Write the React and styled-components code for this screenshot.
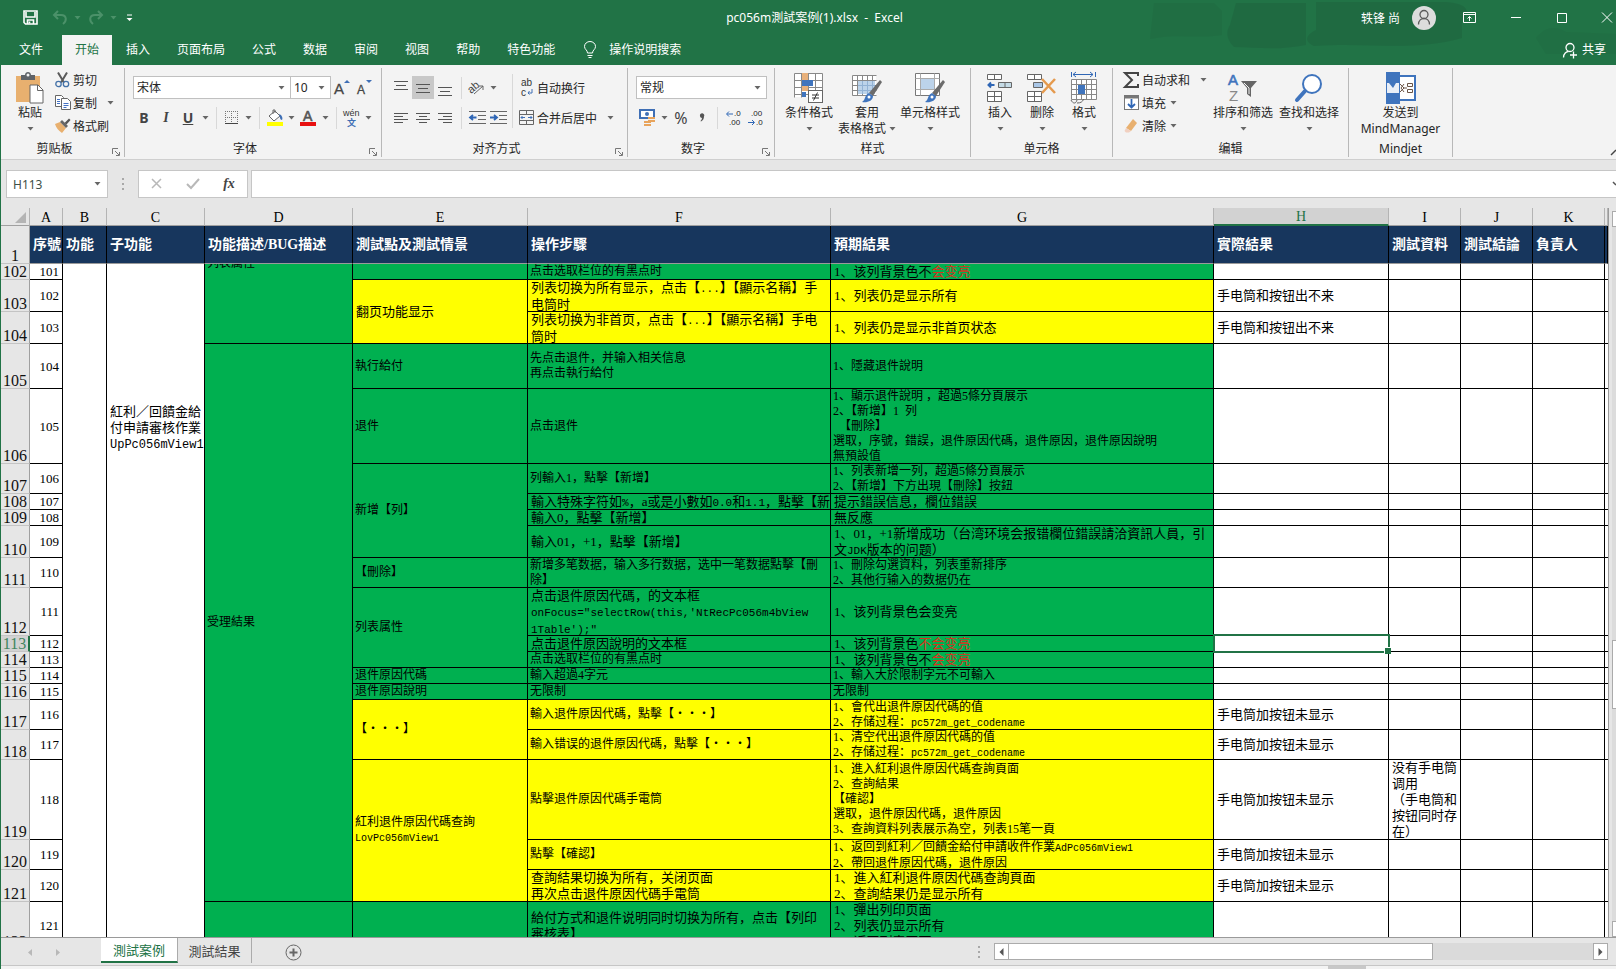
import React from 'react'
import styled, { createGlobalStyle } from 'styled-components'

const GlobalStyle = createGlobalStyle`
    * {
        box-sizing: border-box;
    }
    body {
        margin: 0;
        overflow: hidden;
        font-family: 'Noto Sans', 'Noto Sans CJK SC', sans-serif;
        font-size: 12px;
        color: #262626;
    }
    button, input, select {
        font: inherit;
        color: inherit;
        border: 0;
        padding: 0;
        margin: 0;
        background: none;
    }
    svg {
        overflow: visible;
    }
`

const Window = styled.div`
    display: flex;
    flex-direction: column;
    height: 100vh;
    border-left: 1px solid #217346;
    background: #e6e6e6;
    overflow: hidden;
`

/* ---------- title bar and tabs ---------- */

const Top = styled.header`
    position: relative;
    background: #217346;
    color: #fff;
`

const Smudge = styled.svg`
    position: absolute;
    top: 0;
    right: 0;
`

const TitleBar = styled.div`
    position: relative;
    display: grid;
    grid-template-columns: 1fr auto 1fr;
    align-items: center;
    height: 35px;
`

const QuickBar = styled.div`
    display: flex;
    align-items: center;
    padding-left: 18px;
`

const QuickButton = styled.button`
    display: flex;
    align-items: center;
    justify-content: center;
    width: ${p => p.$w || 22}px;
    height: 24px;
    margin-right: ${p => p.$gap || 0}px;
    color: ${p => (p.$off ? '#4b9169' : '#fff')};
`

const Title = styled.h1`
    margin: 0;
    padding-left: 12px;
    font-size: 12px;
    font-weight: 400;
    line-height: 16px;
    white-space: pre;
`

const WindowTools = styled.div`
    display: flex;
    align-items: center;
    justify-content: flex-end;
`

const Avatar = styled.span`
    display: flex;
    align-items: center;
    justify-content: center;
    width: 24px;
    height: 24px;
    margin: 0 18px 0 12px;
    border-radius: 50%;
    background: #dcdcdc;
`

const WindowButton = styled.button`
    display: flex;
    align-items: center;
    justify-content: center;
    width: ${p => p.$w || 46}px;
    height: 30px;
`

const Tabs = styled.nav`
    position: relative;
    display: flex;
    gap: 1px;
    height: 30px;
    line-height: 28px;
`

const Tab = styled.button`
    padding: 0 13px;
    background: ${p => (p.$active ? '#f3f3f3' : 'transparent')};
    color: ${p => (p.$active ? '#217346' : '#fff')};
`

const TabFile = styled(Tab)`
    padding: 0 18px;
`

const Tell = styled.button`
    display: flex;
    align-items: center;
    gap: 13px;
    margin-left: 15px;
`

const Share = styled.button`
    display: flex;
    align-items: center;
    gap: 4px;
    margin-left: auto;
    padding-right: 10px;
`

/* ---------- ribbon ---------- */

const Ribbon = styled.div`
    display: flex;
    padding: 3px 0 2px;
    background: #f3f3f3;
    border-bottom: 1px solid #cfcfcf;
`

const Group = styled.section`
    display: flex;
    flex-direction: column;
    width: ${p => p.$w}px;
    height: 89px;
    border-right: 1px solid #b8b8b8;
`

const GroupBody = styled.div`
    display: flex;
    flex: 1;
    padding-left: ${p => p.$pad || 0}px;
    justify-content: ${p => (p.$center ? 'center' : 'flex-start')};
`

const GroupFoot = styled.div`
    display: flex;
    height: 16px;
    line-height: 16px;
    text-align: center;
`

const GroupName = styled.span`
    flex: 1;
`

const Launcher = styled.button`
    display: flex;
    align-items: flex-end;
    justify-content: center;
    width: 16px;
    padding-bottom: 1px;
`

const Rows = styled.div`
    display: flex;
    flex-direction: column;
    gap: ${p => (p.$tight ? 0 : 7)}px;
    padding-top: ${p => (p.$tight ? 0 : 8)}px;
`

const Row = styled.div`
    display: flex;
    align-items: center;
    height: 23px;
`

const IconButton = styled.button`
    display: flex;
    align-items: center;
    justify-content: center;
    width: ${p => p.$w || 22}px;
    height: 23px;
    background: ${p => (p.$on ? '#c8c8c8' : 'transparent')};
`

const DropButton = styled(IconButton)`
    width: 12px;
`

const LetterButton = styled(IconButton)`
    font-size: ${p => (p.$thin ? 16 : 14)}px;
    font-weight: ${p => (p.$thin ? 400 : 700)};
    font-style: ${p => (p.$italic ? 'italic' : 'normal')};
    font-family: ${p => (p.$italic ? "'Liberation Serif', serif" : 'inherit')};
    text-decoration: ${p => (p.$under ? 'underline' : 'none')};
    color: #444;
`

const Sep = styled.span`
    width: 1px;
    height: ${p => (p.$tall ? 54 : 22)}px;
    margin: ${p => (p.$tall ? '6px 3px 0' : '0 5px')};
    background: #d8d8d8;
`

const ToolButton = styled.button`
    display: flex;
    align-items: center;
    height: 23px;
    white-space: nowrap;
`

const ToolIcon = styled.span`
    display: flex;
    justify-content: center;
    width: 21px;
`

const ToolDrop = styled.span`
    display: flex;
    margin-left: ${p => p.$gap || 4}px;
`

const BigButton = styled.button`
    display: flex;
    flex-direction: column;
    align-items: center;
    align-self: flex-start;
    width: ${p => p.$w}px;
    padding-top: 3px;
    line-height: 16px;
    white-space: nowrap;
`

const BigIcon = styled.span`
    display: flex;
    align-items: center;
    height: 34px;
`

const BigLine = styled.span`
    display: flex;
    align-items: center;
    gap: 3px;
    height: 16px;
`

const SelectBox = styled.label`
    display: grid;
    align-items: center;
    width: ${p => p.$w}px;
    height: 23px;
    margin-right: -1px;
    border: 1px solid #c0c0c0;
    background: #fff;
    > * {
        grid-area: 1 / 1;
    }
    > svg {
        justify-self: end;
        margin-right: 5px;
        pointer-events: none;
    }
    select {
        width: 100%;
        padding-left: 3px;
        appearance: none;
        outline: none;
    }
`

const Collapse = styled.button`
    align-self: flex-end;
    display: flex;
    margin-left: auto;
`

/* ---------- formula bar ---------- */

const FormulaBar = styled.div`
    display: flex;
    height: 48px;
    padding: 10px 0 10px 5px;
`

const NameBox = styled.label`
    display: flex;
    align-items: center;
    width: 102px;
    padding-right: 6px;
    border: 1px solid #c6c6c6;
    background: #fff;
    color: #3d4f46;
    input {
        flex: 1;
        min-width: 0;
        padding-left: 6px;
        outline: none;
    }
`

const Grip = styled.span`
    display: flex;
    align-items: center;
    justify-content: center;
    width: 30px;
`

const FormulaTools = styled.div`
    display: flex;
    align-items: center;
    justify-content: space-around;
    width: 110px;
    border: 1px solid #c6c6c6;
    background: #fff;
`

const FormulaInput = styled.div`
    display: flex;
    flex: 1;
    margin-left: 3px;
    border: 1px solid #c6c6c6;
    border-right: 0;
    background: #fff;
    input {
        flex: 1;
        padding-left: 6px;
        outline: none;
    }
`

/* ---------- sheet ---------- */

const SheetArea = styled.main`
    display: flex;
    flex: 1;
    min-height: 0;
    border-bottom: 1px solid #9a9a9a;
`

const SheetClip = styled.div`
    flex: 1;
    min-width: 0;
    overflow: hidden;
    border-right: 1px solid #9a9a9a;
    background: #fff;
`

const Sheet = styled.table`
    width: 100%;
    table-layout: fixed;
    border-collapse: separate;
    border-spacing: 0;
    font-family: 'Liberation Serif', 'Noto Sans CJK SC', serif;
    color: #000;
    white-space: nowrap;
    td:last-child {
        border-right: 0;
    }
`

const ColHead = styled.th`
    height: 18px;
    padding: ${p => (p.$on ? 1 : 2)}px 0 0;
    border-right: 1px solid #b4b4b4;
    border-bottom: ${p => (p.$on ? '2px solid #217346' : '1px solid #a0a0a0')};
    background: ${p => (p.$on ? '#d2d2d2' : '#e6e6e6')};
    color: ${p => (p.$on ? '#217346' : '#000')};
    font-size: 14px;
    font-weight: 400;
    line-height: 15px;
`

const Corner = styled(ColHead)`
    text-align: right;
    svg {
        display: block;
        margin: 0 3px 0 auto;
    }
`

const RowHead = styled.th`
    height: ${p => p.$h}px;
    padding: 0;
    border-right: ${p => (p.$on ? '2px solid #217346' : '1px solid #a0a0a0')};
    border-bottom: 1px solid #c4c4c4;
    background: ${p => (p.$on ? '#d2d2d2' : '#e6e6e6')};
    color: ${p => (p.$on ? '#3f8560' : '#111')};
    font-size: 16px;
    font-weight: 400;
    line-height: 15px;
    vertical-align: bottom;
`

const TitleCell = styled.th`
    height: 38px;
    padding: 0 0 0 3px;
    border-right: 1px solid #000;
    border-bottom: 1px solid #9a9a9a;
    background: #17365d;
    color: #fff;
    font-size: 14px;
    font-weight: 700;
    line-height: 16px;
    text-align: left;
`

const fills = { green: '#00b050', yellow: '#ffff00', white: '#fff' }

const Cell = styled.td`
    position: ${p => (p.$selected ? 'relative' : 'static')};
    padding: 0 0 0 ${p => (p.$small ? 2 : 3)}px;
    border-right: 1px solid #000;
    border-bottom: 1px solid #000;
    background: ${p => fills[p.$fill || 'white']};
    font-size: ${p => (p.$small ? 12 : 13)}px;
    line-height: ${p => (p.$small ? 15 : 16)}px;
    vertical-align: middle;
    overflow: ${p => (p.$selected ? 'visible' : 'hidden')};
`

const NumberCell = styled(Cell)`
    padding: 0 3px 0 0;
    line-height: 15px;
    text-align: right;
`

const TopCell = styled(Cell)`
    padding-top: 140px;
    vertical-align: top;
`

const ScrolledCell = styled(Cell)`
    vertical-align: top;
`

/* the tail of a label whose row is scrolled under the frozen header */
const Tail = styled.div`
    display: flex;
    align-items: flex-end;
    height: 7px;
    overflow: hidden;
`

const Text = styled.div`
    max-height: ${p => p.$h}px;
    overflow: hidden;
`

const Code = styled.span`
    font-family: 'Liberation Mono', monospace;
    font-size: ${p => p.$size || 11}px;
`

const Red = styled.span`
    color: #d9301c;
`

const Selection = styled.span`
    position: absolute;
    inset: -2px -2px -2px -1px;
    border: 2px solid #217346;
    &::after {
        content: '';
        position: absolute;
        right: -3px;
        bottom: -3px;
        width: 6px;
        height: 6px;
        border: 1px solid #fff;
        border-width: 1px 0 0 1px;
        background: #217346;
    }
`

const VScroll = styled.div`
    display: flex;
    flex-direction: column;
    width: 7px;
    padding: 3px 0 0 3px;
`

const VPart = styled.span`
    flex: ${p => p.$grow || '0 0 auto'};
    height: ${p => p.$h || 0}px;
    border: ${p => (p.$grow ? 0 : '1px solid #ababab')};
    border-right: 0;
    background: ${p => (p.$grow ? '#dcdcdc' : '#fff')};
`

/* ---------- sheet tabs ---------- */

const Bottom = styled.footer`
    display: flex;
    align-items: flex-start;
    height: 28px;
    border-bottom: 1px solid #c6c6c6;
`

const Nav = styled.div`
    display: flex;
    align-items: center;
    justify-content: center;
    gap: 24px;
    width: 100px;
    height: 28px;
    padding-right: 14px;
`

const SheetTab = styled.button`
    height: 25px;
    width: ${p => (p.$active ? 77 : 74)}px;
    border-right: 1px solid #ababab;
    border-bottom: ${p => (p.$active ? '2px solid #217346' : '0')};
    background: ${p => (p.$active ? '#fff' : 'transparent')};
    color: ${p => (p.$active ? '#217346' : '#444')};
    font-size: 13px;
    line-height: 22px;
`

const AddSheet = styled.button`
    display: flex;
    align-items: center;
    height: 28px;
    margin-left: 33px;
`

const HScroll = styled.div`
    display: flex;
    width: 38%;
    height: 17px;
    margin: 5px 8px 0 0;
    background: #dadada;
`

const HArrow = styled.button`
    display: flex;
    align-items: center;
    justify-content: center;
    width: 15px;
    border: 1px solid #ababab;
    background: #fff;
`

const HThumb = styled.span`
    width: 69%;
    border: 1px solid #ababab;
    border-left: 0;
    background: #fff;
`

const HTrack = styled.span`
    flex: 1;
`

const BottomGrip = styled(Grip)`
    height: 28px;
    margin-left: auto;
`

const Status = styled.div`
    display: flex;
    justify-content: flex-end;
    height: 3px;
    padding-right: 250px;
    background: #f3f3f3;
`

const StatusMark = styled.span`
    width: 38px;
    background: #c8c8c8;
`

/* ---------- drawings ---------- */

const iconFont = 'Liberation Sans, Noto Sans CJK SC, sans-serif'

const Caret = ({ color = '#666' }) => (
    <svg width="7" height="4"><path d="M0.5 0h6L3.5 3.6z" fill={color} /></svg>
)

const Drop = ({ label }) => <DropButton aria-label={label}><Caret /></DropButton>

const Dots = () => (
    <svg width="3" height="15" fill="#a8a8a8">
        <rect width="2" height="2" y="1" /><rect width="2" height="2" y="6" /><rect width="2" height="2" y="11" />
    </svg>
)

const Lines = ({ rows, color = '#555' }) => (
    <svg width="16" height="16" stroke={color}>
        {rows.map(([x, y, w]) => <path key={y} d={`M${x} ${y}.5h${w}`} />)}
    </svg>
)

const SaveIcon = () => (
    <svg width="15" height="15" fill="none" stroke="#fff" strokeWidth="1.6">
        <path d="M1 1h13v13H2.500L1 12.500z" /><path d="M3 2v5h9V2" /><path d="M4.500 14v-4h6v4M6.500 11.500v2" />
    </svg>
)

const UndoIcon = ({ flip }) => (
    <svg width="16" height="15" fill="none" stroke="currentColor" strokeWidth="2" viewBox="0 0 16 15">
        <g transform={flip ? 'translate(16 0) scale(-1 1)' : undefined}>
            <path d="M6 1L2 5l4 4M2 5h7c6 0 6 6 2 9" />
        </g>
    </svg>
)

const PasteIcon = () => (
    <svg width="30" height="32" viewBox="0 0 30 32">
        <path d="M1 4h24v26H1z" fill="#e8b06f" />
        <path d="M6 3h4c0-4 6-4 6 0h4v5H6z" fill="#5f6368" />
        <circle cx="13" cy="3" r="1.500" fill="#f3f3f3" />
        <path d="M15 13h8l5 5v13H15z" fill="#fff" stroke="#666" />
        <path d="M22.500 13v5.500H28" fill="none" stroke="#666" />
    </svg>
)

const CutIcon = () => (
    <svg width="15" height="16" fill="none">
        <path d="M3 0.500l6 10M12 0.500l-6 10" stroke="#5a5a5a" strokeWidth="2" />
        <circle cx="3.500" cy="12" r="2.700" stroke="#4472a8" strokeWidth="1.300" />
        <circle cx="11" cy="12" r="2.700" stroke="#4472a8" strokeWidth="1.300" />
    </svg>
)

const CopyIcon = () => (
    <svg width="16" height="15" fill="#fff" stroke="#666">
        <path d="M0.500 0.500h6l2 2v9h-8z" /><path d="M6.500 3.500h6l3 3v8h-9z" />
        <path d="M2 4.500h3M2 6.500h3M2 8.500h3M8.500 8.500h5M8.500 10.500h5M8.500 12.500h3" stroke="#4472c4" />
    </svg>
)

const PainterIcon = () => (
    <svg width="16" height="15">
        <path d="M0 6l5-2 6 6-4 5c-3-2-6-5-7-9z" fill="#e8b06f" />
        <path d="M5 4l2-2 6 6-2 2z" fill="#666" /><path d="M9.500 5L14 0.500l1.500 1.500L11.500 6.500z" fill="#555" />
    </svg>
)

const FontSizeIcon = ({ down }) => (
    <svg width="16" height="18" fontFamily={iconFont}>
        <text x="0" y="15" fontSize={down ? 12 : 15} fill="#444" stroke="#444" strokeWidth="0.300">A</text>
        <path d={down ? 'M9 1h6l-3 3z' : 'M10 4h6l-3-3z'} fill="#3f6fb5" />
    </svg>
)

const BorderIcon = () => (
    <svg width="14" height="14" stroke="#777" strokeDasharray="1 1">
        <path d="M0 0.500h13M0 6.500h13M0.500 0v13M6.500 0v13M12.500 0v13" />
        <path d="M0 12.500h13" strokeDasharray="none" stroke="#444" />
    </svg>
)

const FillIcon = () => (
    <svg width="18" height="17">
        <path d="M3 7l6-5 5 5-6 5z" fill="#fff" stroke="#666" /><path d="M7 5V1h2v3" fill="none" stroke="#666" />
        <path d="M13 5c3 1 4 4 3 6-2 0-2-3-3-6z" fill="#3f6fb5" />
        <rect y="13" x="1" width="16" height="4" fill="#ff0" />
    </svg>
)

const FontColorIcon = () => (
    <svg width="17" height="17">
        <text x="3" y="12" fontSize="14" fill="#555" stroke="#555" strokeWidth="0.600" fontFamily={iconFont}>A</text>
        <rect y="13" width="16" height="4" fill="#e81010" />
    </svg>
)

const PhoneticIcon = () => (
    <svg width="18" height="20" fontFamily={iconFont}>
        <text x="0" y="8" fontSize="9" fill="#333">wén</text>
        <text x="4" y="18" fontSize="9" fontWeight="700" fill="#3f6fb5">文</text>
    </svg>
)

const OrientIcon = () => (
    <svg width="18" height="17">
        <text x="0" y="11" fontSize="11" fill="#444" transform="rotate(-40 7 9)" fontFamily={iconFont}>ab</text>
        <path d="M6 15l9-8M15 11V7h-4" fill="none" stroke="#666" />
    </svg>
)

const IndentIcon = ({ right }) => (
    <svg width="17" height="14" fill="none">
        <path d="M0 0.500h17M9 4.500h8M9 8.500h8M0 12.500h17" stroke="#666" />
        <path d={right ? 'M0 6.500h6M4 4l3 2.500-3 2.500' : 'M1.500 6.500h6M4 4L1 6.500l3 2.500'} stroke="#2f66b5" strokeWidth="1.800" />
    </svg>
)

const WrapIcon = () => (
    <svg width="14" height="18" fontFamily={iconFont} fontSize="10" fill="#333">
        <text x="1" y="7">ab</text><text x="1" y="17">c</text>
        <path d="M12 10v4H8M9.500 12L8 14l1.500 1.500" fill="none" stroke="#3f6fb5" />
    </svg>
)

const MergeIcon = () => (
    <svg width="16" height="16" fill="none" stroke="#666">
        <path d="M0.500 0.500h14v14h-14zM0.500 4.500h14M0.500 10.500h14M7.500 0.500v4M7.500 10.500v4" />
        <path d="M2 7.500h4M9 7.500h4M3.500 6L2 7.500 3.500 9M11.500 6L13 7.500 11.500 9" stroke="#3f6fb5" />
    </svg>
)

const MoneyIcon = () => (
    <svg width="17" height="17">
        <rect x="1" y="1" width="14" height="8" fill="#fff" stroke="#3f6fb5" strokeWidth="2" />
        <circle cx="8" cy="5" r="2" fill="#3f6fb5" />
        <path d="M9 8h7v2H9zM9 11h7v2H9zM5 12h7v2H5zM5 15h7v2H5z" fill="#e8a45c" />
    </svg>
)

const DecimalIcon = ({ less }) => (
    <svg width="16" height="17" fontSize="8" fill="#222" fontFamily={iconFont}>
        <text x={less ? 3 : 8} y="7">{less ? '.00' : '.0'}</text>
        <text x={less ? 8 : 3} y="16">{less ? '.0' : '.00'}</text>
        <path d={less ? 'M0 13.500h6M4 11l2.500 2.500L4 16' : 'M1 5h6M3 2.500L0.500 5 3 7.500'} fill="none" stroke="#2f66b5" />
    </svg>
)

const GridBase = ({ x = 0, y = 0, w = 24, h = 24, step = 6 }) => {
    const lines = []
    for (let i = 0; i <= w; i += step) lines.push(`M${x + i}.5 ${y}.5v${h}`)
    for (let j = 0; j <= h; j += step) lines.push(`M${x}.5 ${y + j}.5h${w}`)
    return (
        <g>
            <rect x={x} y={y} width={w} height={h} fill="#fff" />
            <path d={lines.join('')} stroke="#888" fill="none" />
        </g>
    )
}

const Brush = () => (
    <g>
        <path d="M28 8l2 2-9 14-4-3z" fill="#6b6b6b" />
        <path d="M17 21l4 3c0 5-6 7-11 6 4-2 2-7 7-9z" fill="#3f74bd" />
        <circle cx="17" cy="25" r="1.500" fill="#fff" />
    </g>
)

const ConditionIcon = () => (
    <svg width="30" height="32">
        <GridBase x={0} y={1} w={28} h={24} step={7} />
        <path d="M8 1h6v7H8zM8 14h6v5H8z" fill="#e8b07a" /><path d="M8 8h11v6H8zM8 20h4v5H8z" fill="#3f74bd" />
        <rect x="14.500" y="18.500" width="14" height="12" fill="#fff" stroke="#666" />
        <path d="M18 23h7M18 26h7M23.500 20.500l-4 8" stroke="#333" />
    </svg>
)

const TableFormatIcon = () => (
    <svg width="31" height="32">
        <GridBase x={0} y={3} w={24} h={20} step={5} />
        <path d="M6 9h17v13H6z" fill="#bcd3ea" /><path d="M6 13.500h17M6 18.500h17M10.500 9v13M15.500 9v13M20.500 9v13" stroke="#92b2d4" />
        <Brush />
    </svg>
)

const CellStyleIcon = () => (
    <svg width="31" height="32">
        <path d="M0.500 1.500h24v22h-24z" fill="#fff" stroke="#777" />
        <path d="M0.500 6.500h24M0.500 17.500h24M5.500 1.500v22M19.500 1.500v22" stroke="#aaa" />
        <rect x="6" y="7" width="13" height="10" fill="#bcd3ea" />
        <Brush />
    </svg>
)

const InsertIcon = () => (
    <svg width="26" height="30" fill="#fff" stroke="#666">
        <path d="M0.500 1.500h14v5h-14zM7.500 1.500v5M0.500 18.500h14v10h-14zM0.500 23.500h14M7.500 18.500v10" />
        <path d="M11.500 9.500h13v5h-13z" fill="#c5dbe6" /><path d="M18 9.500v5" />
        <path d="M1.500 12h6M4 9.500L1.500 12 4 14.500" fill="none" stroke="#2f66b5" strokeWidth="2" />
    </svg>
)

const DeleteIcon = () => (
    <svg width="30" height="30" fill="#fff" stroke="#666">
        <path d="M0.500 1.500h14v5h-14zM7.500 1.500v5M0.500 18.500h14v10h-14zM0.500 23.500h14M7.500 18.500v10" />
        <path d="M6.500 9.500h9v5h-9z" fill="#a9c6e6" />
        <path d="M15 6l13 14M28 6L15 20" stroke="#e59a4e" strokeWidth="2.500" />
    </svg>
)

const FormatIcon = () => (
    <svg width="28" height="32">
        <path d="M3 2.500h20M6 0L3 2.500 6 5M20 0l3 2.500L20 5M1.500 0v5M25.500 0v5" stroke="#2f66b5" fill="none" />
        <GridBase x={1} y={7} w={25} h={20} step={5} />
        <rect x="8" y="13" width="7" height="9" fill="#3f74bd" />
        <path d="M1 28c2 4 5 4 6 0M7 31c4 0 5-1 7-4" stroke="#666" fill="none" />
    </svg>
)

const SumIcon = () => (
    <svg width="15" height="16"><path d="M14 4V1H1l7 7-7 7h13v-3" fill="none" stroke="#444" strokeWidth="2" /></svg>
)

const FillDownIcon = () => (
    <svg width="15" height="16" fill="none">
        <rect x="0.500" y="0.500" width="14" height="14" fill="#fff" stroke="#777" /><path d="M1 2h13" stroke="#777" strokeWidth="3" />
        <path d="M7.500 4v8M4 9l3.500 3.500L11 9" stroke="#2f66b5" strokeWidth="1.800" />
    </svg>
)

const EraserIcon = () => (
    <svg width="15" height="15"><path d="M9 1l4 4-6 8-5-3z" fill="#e8b06f" /><path d="M2 10l5 3-2 1.500H2L0.500 13z" fill="#f1d0c0" /></svg>
)

const SortIcon = () => (
    <svg width="30" height="30" fontFamily={iconFont} fontSize="15">
        <text x="0" y="12" fill="#3f74bd" stroke="#3f74bd" strokeWidth="0.600">A</text>
        <text x="1" y="28" fill="#888">Z</text>
        <path d="M13 8h16l-6 7v9l-4-3v-6z" fill="#666" /><path d="M16 10l5 5v6" stroke="#f3f3f3" fill="none" />
    </svg>
)

const FindIcon = () => (
    <svg width="28" height="30" fill="none" stroke="#3f74bd">
        <circle cx="17" cy="11" r="9" strokeWidth="2" fill="#fff" /><path d="M10 18L2 27" strokeWidth="4" strokeLinecap="round" />
    </svg>
)

const MindIcon = () => (
    <svg width="30" height="32">
        <rect x="8" y="4" width="21" height="24" fill="#fff" stroke="#3f74bd" strokeWidth="2" />
        <rect width="14" height="32" fill="#3f74bd" />
        <path d="M1 11h2l4 5 3-5h3v10H1z" fill="#e8eef7" />
        <path d="M14 12l4 4-4 4M18 12l-3 4 3 4M18 16h3M21.500 11.500h5v3h-5zM21.500 17.500h5v3h-5z" fill="none" stroke="#6b5546" />
    </svg>
)

const PersonIcon = ({ color, plus }) => (
    <svg width="16" height="17" fill="none" stroke={color} strokeWidth="1.300">
        <circle cx="8" cy="5.500" r="4" /><path d={plus ? 'M1.500 15.500c0-4 3-6 5-6M8 13h7M11.500 9.500v7' : 'M2.500 15.500c0-8 11-8 11 0'} />
    </svg>
)

const LaunchIcon = () => (
    <svg width="8" height="8" fill="none" stroke="#777"><path d="M0.500 6V0.500H6M3 3l4 4M7.500 4v3.500H4" /></svg>
)

const BulbIcon = () => (
    <svg width="12" height="18" fill="none" stroke="#fff">
        <path d="M3.500 12c0-3-3-3.500-3-6.500a5.500 5 0 0 1 11 0c0 3-3 3.500-3 6.500zM3.500 14.500h5M4.500 16.500h3" />
    </svg>
)

/* ---------- data ---------- */

const tabs = ['开始', '插入', '页面布局', '公式', '数据', '审阅', '视图', '帮助', '特色功能']

const columns = [
    ['A', 33], ['B', 44], ['C', 98], ['D', 148], ['E', 175], ['F', 303],
    ['G', 383], ['H', 175], ['I', 72], ['J', 72], ['K', 72], ['', null],
]

const titles = [
    '序號', '功能', '子功能', '功能描述/BUG描述', '測試點及測試情景', '操作步驟',
    '預期結果', '實際結果', '測試資料', '測試結論', '負責人', '',
]

const cell = (text, fill, small, span) => ({ text, fill, small, span })
const G = (text, span) => cell(text, 'green', true, span)
const GL = (text, span) => cell(text, 'green', false, span)
const Y = (text, span) => cell(text, 'yellow', true, span)
const YL = (text, span) => cell(text, 'yellow', false, span)

const rows = [
    { n: 102, h: 16, e: G(''), f: G('点击选取栏位的有黑点时'), g: GL(<>1、该列背景色不<Red>会变亮</Red></>) },
    { n: 103, h: 32, e: YL('翻页功能显示', 2), f: YL(<>列表切换为所有显示，点击【<Code>...</Code>】【顯示名稱】手<br />电筒时</>), g: YL('1、列表仍是显示所有'), r: '手电筒和按钮出不来' },
    { n: 104, h: 32, f: YL(<>列表切换为非首页，点击【<Code>...</Code>】【顯示名稱】手电<br />筒时</>), g: YL('1、列表仍是显示非首页状态'), r: '手电筒和按钮出不来' },
    { n: 105, h: 45, d: G('受理結果', 17), e: G('執行給付'), f: G(<>先点击退件，并输入相关信息<br />再点击執行給付</>), g: G('1、隱藏退件說明') },
    { n: 106, h: 75, e: G('退件'), f: G('点击退件'), g: G(<>1、顯示退件說明 ，超過5條分頁展示<br />2、【新增】1&nbsp; 列<br />&nbsp; 【刪除】<br />選取，序號，錯誤，退件原因代碼，退件原因，退件原因說明<br />無預設值</>) },
    { n: 107, h: 30, e: G('新增【列】', 4), f: G('列輸入1，點擊【新增】'), g: G(<>1、列表新增一列，超過5條分頁展示<br />2、【新增】下方出現【刪除】按鈕</>) },
    { n: 108, h: 16, f: GL(<>輸入特殊字符如<Code>%</Code>，a或是小數如<Code>0.0</Code>和<Code>1.1</Code>，點擊【新增】</>), g: GL('提示錯誤信息，欄位錯誤') },
    { n: 109, h: 16, f: GL('輸入0，點擊【新增】'), g: GL('無反應') },
    { n: 110, h: 32, f: GL('輸入01，+1，點擊【新增】'), g: GL(<>1、01，+1新增成功（台湾环境会报错欄位錯誤請洽資訊人員，引<br />文<Code>JDK</Code>版本的问题）</>) },
    { n: 111, h: 30, e: G('【刪除】'), f: G(<>新增多笔数据，输入多行数据，选中一笔数据點擊【刪<br />除】</>), g: G(<>1、刪除勾選資料，列表重新排序<br />2、其他行输入的数据仍在</>) },
    { n: 112, h: 48, e: G('列表属性', 3), f: GL(<>点击退件原因代碼，的文本框<br /><Code>onFocus="selectRow(this,'NtRecPc056m4bView</Code><br /><Code>1Table');"</Code></>), g: GL('1、该列背景色会变亮') },
    { n: 113, h: 16, f: GL('点击退件原因說明的文本框'), g: GL(<>1、该列背景色<Red>不会变亮</Red></>), selected: true },
    { n: 114, h: 16, f: G('点击选取栏位的有黑点时'), g: GL(<>1、该列背景色不<Red>会变亮</Red></>) },
    { n: 115, h: 16, e: G('退件原因代碼'), f: G('輸入超過4字元'), g: G('1、輸入大於限制字元不可輸入') },
    { n: 116, h: 16, e: G('退件原因說明'), f: G('无限制'), g: G('无限制') },
    { n: 117, h: 30, e: Y('【・・・】', 2), f: Y('輸入退件原因代碼，點擊【・・・】'), g: Y(<>1、會代出退件原因代碼的值<br />2、存储过程：<Code $size={10}>pc572m_get_codename</Code></>), r: '手电筒加按钮未显示' },
    { n: 118, h: 30, f: Y('輸入错误的退件原因代碼，點擊【・・・】'), g: Y(<>1、清空代出退件原因代碼的值<br />2、存储过程：<Code $size={10}>pc572m_get_codename</Code></>), r: '手电筒加按钮未显示' },
    { n: 119, h: 80, e: Y(<>紅利退件原因代碼查詢<br /><Code $size={10}>LovPc056mView1</Code></>, 3), f: Y('點擊退件原因代碼手電筒'), g: Y(<>1、進入紅利退件原因代碼查詢頁面<br />2、查詢結果<br />【確認】<br />選取，退件原因代碼，退件原因<br />3、查詢資料列表展示為空，列表15笔一頁</>), r: '手电筒加按钮未显示', i: <>没有手电筒<br />调用<br />（手电筒和<br />按钮同时存<br />在）</> },
    { n: 120, h: 30, f: Y('點擊【確認】'), g: Y(<>1、返回到紅利／回饋金給付申請收件作業<Code $size={10}>AdPc056mView1</Code><br />2、帶回退件原因代碼，退件原因</>), r: '手电筒加按钮未显示' },
    { n: 121, h: 32, f: YL(<>查詢結果切换为所有，关闭页面<br />再次点击退件原因代碼手電筒</>), g: YL(<>1、進入紅利退件原因代碼查詢頁面<br />2、查詢結果仍是显示所有</>), r: '手电筒加按钮未显示' },
    { n: 122, h: 48, d: G(''), e: G(''), f: GL(<>給付方式和退件说明同时切换为所有，点击【列印<br />審核表】</>), g: GL(<>1、彈出列印页面<br />2、列表仍显示所有<br />3、返回列表頁面</>) },
]

const DataCell = ({ data, h }) => (
    <Cell $fill={data.fill} $small={data.small} rowSpan={data.span}>
        {data.span ? data.text : <Text $h={h - 1}>{data.text}</Text>}
    </Cell>
)

const Big = ({ w, icon, lines, drop }) => (
    <BigButton $w={w}>
        <BigIcon>{icon}</BigIcon>
        {lines.map((line, i) => (
            <BigLine key={line}>
                {line}
                {drop && i === 1 && <Caret />}
            </BigLine>
        ))}
        {lines.length === 1 && <BigLine><Caret /></BigLine>}
    </BigButton>
)

const Tool = ({ icon, text, drop, gap }) => (
    <ToolButton>
        <ToolIcon>{icon}</ToolIcon>
        {text}
        {drop && <ToolDrop $gap={gap}><Caret /></ToolDrop>}
    </ToolButton>
)

const RibbonGroup = ({ name, w, pad, center, launch, children }) => (
    <Group $w={w}>
        <GroupBody $pad={pad} $center={center}>{children}</GroupBody>
        <GroupFoot>
            <GroupName>{name}</GroupName>
            {launch && <Launcher aria-label={`${name}设置`}><LaunchIcon /></Launcher>}
        </GroupFoot>
    </Group>
)

const Header = () => (
    <Top>
        <Smudge width="480" height="65" fill="#1d5a3a" opacity="0.35" aria-hidden="true">
            <path d="M18 3h60l8 8v24c-25 4-45-2-72 4z" opacity="0.5" />
            <path d="M100 3h70v42c-30 6-50 2-72 2-8-8-8-16-4-22z" />
            <path d="M180 2h130c24 2 24 10 16 20v16c-50 14-90 4-148 8-12-6-6-12 2-16z" />
            <path d="M400 38c10-12 20-12 30-6l50 2v20h-70z" opacity="0.4" />
        </Smudge>
        <TitleBar>
            <QuickBar>
                <QuickButton $gap={8} aria-label="保存"><SaveIcon /></QuickButton>
                <QuickButton $off aria-label="撤消"><UndoIcon /></QuickButton>
                <QuickButton $w={12} $gap={2} $off aria-label="撤消列表"><Caret color="#4b9169" /></QuickButton>
                <QuickButton $off aria-label="恢复"><UndoIcon flip /></QuickButton>
                <QuickButton $w={12} $gap={4} $off aria-label="恢复列表"><Caret color="#4b9169" /></QuickButton>
                <QuickButton $w={12} aria-label="自定义快速访问工具栏">
                    <svg width="7" height="8"><path d="M1 1h5" stroke="#fff" /><path d="M0.500 4h6l-3 3z" fill="#fff" /></svg>
                </QuickButton>
            </QuickBar>
            <Title>pc056m測試案例(1).xlsx  -  Excel</Title>
            <WindowTools>
                轶锋 尚
                <Avatar><PersonIcon color="#5a5a5a" /></Avatar>
                <WindowButton $w={32} aria-label="功能区显示选项">
                    <svg width="14" height="12" fill="none" stroke="#fff"><path d="M0.500 0.500h12v10h-12zM0.500 2.500h12M6.500 9V4.500M4.500 6.500l2-2 2 2" /></svg>
                </WindowButton>
                <WindowButton $w={60} aria-label="最小化"><svg width="10" height="2"><path d="M0 0.500h10" stroke="#fff" /></svg></WindowButton>
                <WindowButton $w={32} aria-label="最大化"><svg width="10" height="10"><path d="M0.500 0.500h9v9h-9z" fill="none" stroke="#fff" /></svg></WindowButton>
                <WindowButton $w={38} aria-label="关闭">
                    <svg width="30" height="11"><path d="M20 0.500l10 10M30 0.500l-10 10" stroke="#fff" /></svg>
                </WindowButton>
            </WindowTools>
        </TitleBar>
        <Tabs>
            <TabFile>文件</TabFile>
            {tabs.map(tab => <Tab key={tab} $active={tab === '开始'}>{tab}</Tab>)}
            <Tell><BulbIcon />操作说明搜索</Tell>
            <Share><PersonIcon color="#fff" plus />共享</Share>
        </Tabs>
    </Top>
)

const RibbonBar = () => (
    <Ribbon>
        <RibbonGroup name="剪贴板" w={124} pad={7} launch>
            <Big w={44} icon={<PasteIcon />} lines={['粘贴']} />
            <Rows $tight>
                <Tool icon={<CutIcon />} text="剪切" />
                <Tool icon={<CopyIcon />} text="复制" drop gap={10} />
                <Tool icon={<PainterIcon />} text="格式刷" />
            </Rows>
        </RibbonGroup>
        <RibbonGroup name="字体" w={257} pad={8} launch>
            <Rows>
                <Row>
                    <SelectBox $w={158}>
                        <select aria-label="字体"><option>宋体</option></select>
                        <Caret />
                    </SelectBox>
                    <SelectBox $w={41}>
                        <select aria-label="字号"><option>10</option></select>
                        <Caret />
                    </SelectBox>
                    <IconButton $w={24} aria-label="增大字号"><FontSizeIcon /></IconButton>
                    <IconButton aria-label="减小字号"><FontSizeIcon down /></IconButton>
                </Row>
                <Row>
                    <LetterButton>B</LetterButton>
                    <LetterButton $italic>I</LetterButton>
                    <LetterButton $under>U</LetterButton>
                    <Drop label="下划线" />
                    <Sep />
                    <IconButton $w={20} aria-label="边框"><BorderIcon /></IconButton>
                    <Drop label="边框列表" />
                    <Sep />
                    <IconButton $w={20} aria-label="填充颜色"><FillIcon /></IconButton>
                    <Drop label="填充颜色列表" />
                    <IconButton aria-label="字体颜色"><FontColorIcon /></IconButton>
                    <Drop label="字体颜色列表" />
                    <Sep />
                    <IconButton $w={20} aria-label="拼音"><PhoneticIcon /></IconButton>
                    <Drop label="拼音列表" />
                </Row>
            </Rows>
        </RibbonGroup>
        <RibbonGroup name="对齐方式" w={246} pad={8} launch>
            <Rows>
                <Row>
                    <IconButton aria-label="顶端对齐"><Lines rows={[[1, 1, 14], [3, 5, 10], [1, 9, 14]]} /></IconButton>
                    <IconButton $on aria-label="垂直居中"><Lines rows={[[1, 4, 14], [3, 8, 10], [1, 12, 14]]} /></IconButton>
                    <IconButton aria-label="底端对齐"><Lines rows={[[1, 7, 14], [3, 11, 10], [1, 15, 14]]} /></IconButton>
                    <Sep />
                    <IconButton $w={20} aria-label="方向"><OrientIcon /></IconButton>
                    <Drop label="方向列表" />
                </Row>
                <Row>
                    <IconButton aria-label="左对齐"><Lines rows={[[1, 3, 14], [1, 6, 9], [1, 9, 14], [1, 12, 9]]} /></IconButton>
                    <IconButton aria-label="居中"><Lines rows={[[1, 3, 14], [4, 6, 8], [1, 9, 14], [4, 12, 8]]} /></IconButton>
                    <IconButton aria-label="右对齐"><Lines rows={[[1, 3, 14], [6, 6, 9], [1, 9, 14], [6, 12, 9]]} /></IconButton>
                    <Sep />
                    <IconButton $w={20} aria-label="减少缩进"><IndentIcon /></IconButton>
                    <IconButton aria-label="增加缩进"><IndentIcon right /></IconButton>
                </Row>
            </Rows>
            <Sep $tall />
            <Rows>
                <Tool icon={<WrapIcon />} text="自动换行" />
                <Tool icon={<MergeIcon />} text="合并后居中" drop gap={10} />
            </Rows>
        </RibbonGroup>
        <RibbonGroup name="数字" w={147} pad={8} launch>
            <Rows>
                <Row>
                    <SelectBox $w={131}>
                        <select aria-label="数字格式"><option>常规</option></select>
                        <Caret />
                    </SelectBox>
                </Row>
                <Row>
                    <IconButton aria-label="会计数字格式"><MoneyIcon /></IconButton>
                    <Drop label="会计数字格式列表" />
                    <LetterButton $thin>%</LetterButton>
                    <IconButton $w={20} aria-label="千位分隔样式">
                        <svg width="5" height="8"><path d="M0 2a2.200 2.200 0 1 1 4 0.500c0 2-1 4-3 5l-0.500-0.500c1-1 1.500-2 1.500-3C1 4 0 3 0 2z" fill="#555" /></svg>
                    </IconButton>
                    <Sep />
                    <IconButton aria-label="增加小数位数"><DecimalIcon /></IconButton>
                    <IconButton aria-label="减少小数位数"><DecimalIcon less /></IconButton>
                </Row>
            </Rows>
        </RibbonGroup>
        <RibbonGroup name="样式" w={196} pad={4}>
            <Big w={60} icon={<ConditionIcon />} lines={['条件格式']} />
            <Big w={56} icon={<TableFormatIcon />} lines={['套用', '表格格式']} drop />
            <Big w={70} icon={<CellStyleIcon />} lines={['单元格样式']} />
        </RibbonGroup>
        <RibbonGroup name="单元格" w={142} pad={8}>
            <Big w={42} icon={<InsertIcon />} lines={['插入']} />
            <Big w={42} icon={<DeleteIcon />} lines={['删除']} />
            <Big w={42} icon={<FormatIcon />} lines={['格式']} />
        </RibbonGroup>
        <RibbonGroup name="编辑" w={236} pad={8}>
            <Rows $tight>
                <Tool icon={<SumIcon />} text="自动求和" drop gap={10} />
                <Tool icon={<FillDownIcon />} text="填充" drop />
                <Tool icon={<EraserIcon />} text="清除" drop />
            </Rows>
            <Big w={72} icon={<SortIcon />} lines={['排序和筛选']} />
            <Big w={60} icon={<FindIcon />} lines={['查找和选择']} />
        </RibbonGroup>
        <RibbonGroup name="Mindjet" w={104} center>
            <Big w={90} icon={<MindIcon />} lines={['发送到', 'MindManager']} />
        </RibbonGroup>
        <Collapse aria-label="折叠功能区">
            <svg width="5" height="8" fill="none" stroke="#444" strokeWidth="1.500"><path d="M0 6l5-5" /></svg>
        </Collapse>
    </Ribbon>
)

const Formula = () => (
    <FormulaBar>
        <NameBox>
            <input aria-label="名称框" defaultValue="H113" />
            <Caret />
        </NameBox>
        <Grip><Dots /></Grip>
        <FormulaTools>
            <IconButton aria-label="取消"><svg width="12" height="12"><path d="M1 1l9 9M10 1l-9 9" stroke="#b8b8b8" strokeWidth="1.500" /></svg></IconButton>
            <IconButton aria-label="输入"><svg width="14" height="12"><path d="M1 6l4 4 8-9" fill="none" stroke="#b8b8b8" strokeWidth="2" /></svg></IconButton>
            <LetterButton $italic aria-label="插入函数">fx</LetterButton>
        </FormulaTools>
        <FormulaInput>
            <input aria-label="编辑栏" />
            <svg width="4" height="26"><path d="M1 11l3 3" stroke="#555" strokeWidth="1.500" /></svg>
        </FormulaInput>
    </FormulaBar>
)

const SheetRow = ({ row, first }) => (
    <tr>
        <RowHead scope="row" $h={row.h} $on={row.selected}>{row.n}</RowHead>
        <NumberCell>{row.n - 1}</NumberCell>
        {first && (
            <>
                <Cell rowSpan={rows.length} />
                <TopCell rowSpan={rows.length}>紅利／回饋金給<br />付申請審核作業<br /><Code $size={12}>UpPc056mView1</Code></TopCell>
                <ScrolledCell $fill="green" $small rowSpan={3}><Tail>列表属性</Tail></ScrolledCell>
            </>
        )}
        {row.d && <DataCell data={row.d} h={row.h} />}
        {row.e && <DataCell data={row.e} h={row.h} />}
        <DataCell data={row.f} h={row.h} />
        <DataCell data={row.g} h={row.h} />
        <Cell $selected={row.selected}>{row.r}{row.selected && <Selection />}</Cell>
        <Cell><Text $h={row.h - 1}>{row.i}</Text></Cell>
        <Cell />
        <Cell />
        <Cell />
    </tr>
)

const SheetView = () => (
    <SheetArea>
        <SheetClip>
            <Sheet>
                <colgroup>
                    <col width="29" />
                    {columns.map(([name, w]) => <col key={name} width={w || undefined} />)}
                </colgroup>
                <thead>
                    <tr>
                        <Corner aria-label="全选"><svg width="11" height="11"><path d="M11 0v11H0z" fill="#b4b4b4" /></svg></Corner>
                        {columns.map(([name]) => <ColHead key={name} $on={name === 'H'}>{name}</ColHead>)}
                    </tr>
                    <tr>
                        <RowHead $h={38}>1</RowHead>
                        {titles.map((title, i) => <TitleCell key={i}>{title}</TitleCell>)}
                    </tr>
                </thead>
                <tbody>
                    {rows.map((row, i) => <SheetRow key={row.n} row={row} first={i === 0} />)}
                </tbody>
            </Sheet>
        </SheetClip>
        <VScroll>
            <VPart $h={16} />
            <VPart $grow="413" />
            <VPart $h={69} />
            <VPart $grow="212" />
            <VPart $h={16} />
        </VScroll>
    </SheetArea>
)

const SheetTabs = () => (
    <>
        <Bottom>
            <Nav>
                <svg width="4" height="7"><path d="M4 0v7L0 3.500z" fill="#b8b8b8" /></svg>
                <svg width="4" height="7"><path d="M0 0v7l4-3.500z" fill="#b8b8b8" /></svg>
            </Nav>
            <SheetTab $active>測試案例</SheetTab>
            <SheetTab>測試結果</SheetTab>
            <AddSheet aria-label="新工作表">
                <svg width="17" height="17" fill="none" stroke="#666"><circle cx="8.500" cy="8.500" r="7.500" /><path d="M8.500 4.500v8M4.500 8.500h8" strokeWidth="2" /></svg>
            </AddSheet>
            <BottomGrip><Dots /></BottomGrip>
            <HScroll>
                <HArrow aria-label="向左滚动"><svg width="5" height="8"><path d="M4.500 0v8L0.500 4z" fill="#555" /></svg></HArrow>
                <HThumb />
                <HTrack />
                <HArrow aria-label="向右滚动"><svg width="5" height="8"><path d="M0.500 0v8l4-4z" fill="#555" /></svg></HArrow>
            </HScroll>
        </Bottom>
        <Status><StatusMark /></Status>
    </>
)

export default function App() {
    return (
        <Window>
            <GlobalStyle />
            <Header />
            <RibbonBar />
            <Formula />
            <SheetView />
            <SheetTabs />
        </Window>
    )
}
